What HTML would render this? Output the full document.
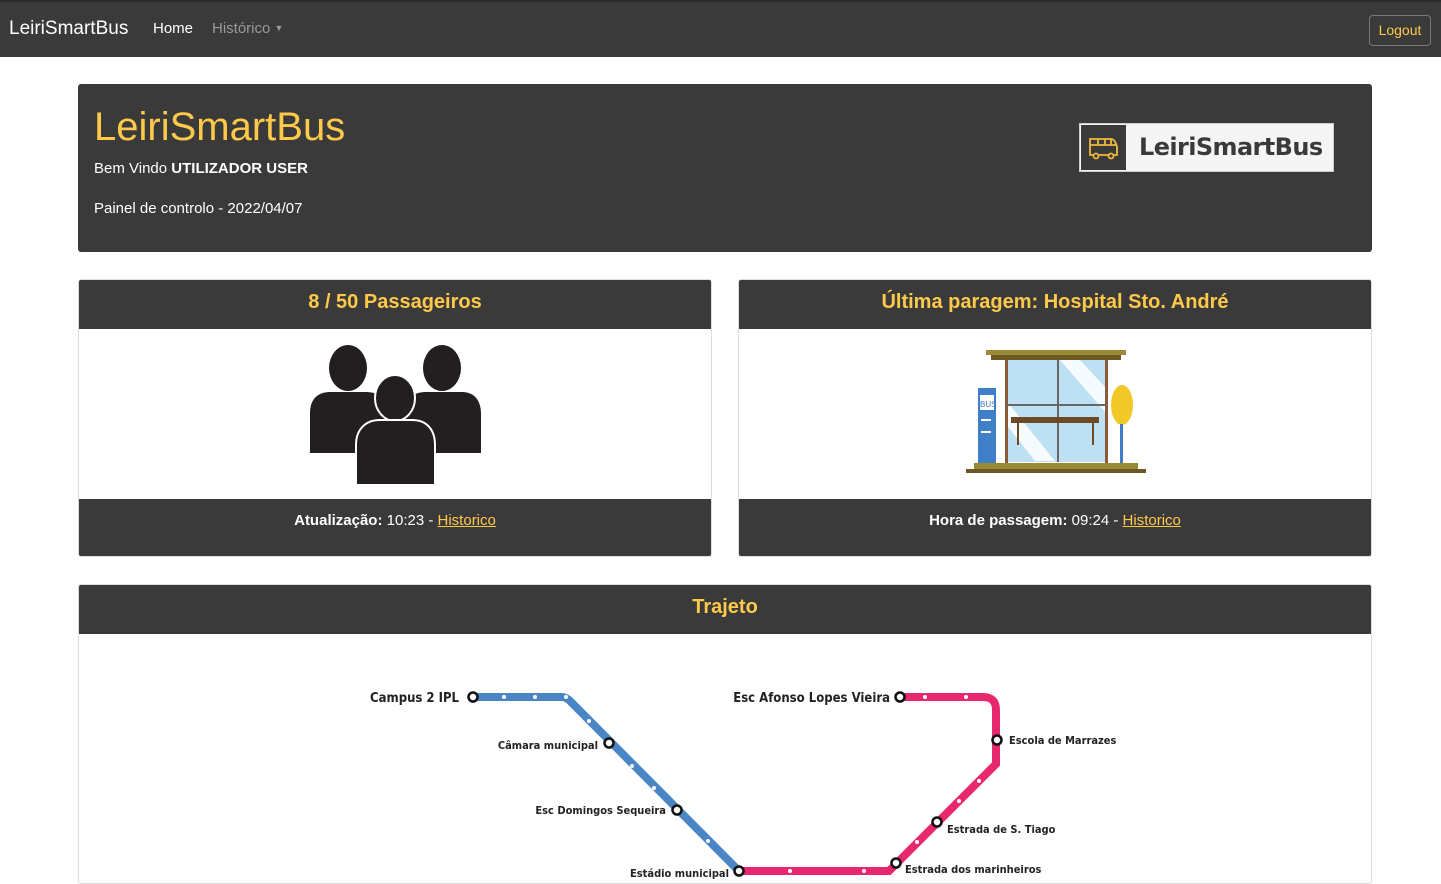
<!DOCTYPE html>
<html><head><meta charset="utf-8"><style>
*{box-sizing:border-box;margin:0;padding:0}
body{width:1441px;height:872px;overflow:hidden;background:#fff;font-family:"Segoe UI","Liberation Sans",sans-serif;position:relative}
.nav{position:absolute;left:0;top:0;width:1441px;height:57px;background:#3a3a3a;border-top:2px solid #2a2a2a}
.abs{position:absolute}
.dark{background:#3a3a3a;border-radius:3px}
.y{color:#ffc94a}
.w{color:#fff}
a{color:#ffc94a;text-decoration:underline}
.hdr{position:absolute;left:0;right:0;top:0;height:49px;background:#3a3a3a;text-align:center;font-weight:bold;font-size:20px;line-height:44px;color:#ffc94a}
.ftr{position:absolute;left:0;right:0;bottom:0;height:57px;background:#3a3a3a;text-align:center;font-size:15px;line-height:44px;color:#fff}
.card{position:absolute;border:1px solid #ddd;border-radius:3px;overflow:hidden;background:#fff}
</style></head><body>
<div class="nav">
 <div class="abs w" style="left:9px;top:16px;font-size:19px">LeiriSmartBus</div>
 <div class="abs w" style="left:153px;top:18px;font-size:15px">Home</div>
 <div class="abs" style="left:212px;top:18px;font-size:15px;color:#9a9a9a">Histórico <span style="font-size:9px;vertical-align:2px">▼</span></div>
 <div class="abs y" style="left:1369px;top:13px;width:62px;height:31px;border:1px solid #777;border-radius:4px;font-size:14px;text-align:center;line-height:29px">Logout</div>
</div>
<div class="abs dark" style="left:78px;top:84px;width:1294px;height:168px">
 <div class="abs y" style="left:16px;top:18px;font-size:40px;line-height:50px">LeiriSmartBus</div>
 <div class="abs w" style="left:16px;top:76px;font-size:15px">Bem Vindo <b>UTILIZADOR USER</b></div>
 <div class="abs w" style="left:16px;top:116px;font-size:15px">Painel de controlo - 2022/04/07</div>
 <div class="abs" style="left:1001px;top:39px;width:255px;height:49px;background:#f5f5f5;border:1px solid #ccc;overflow:hidden">
  <div class="abs" style="left:1px;top:1px;width:45px;height:45px;background:#3a3a3a">
   <svg width="45" height="45" viewBox="0 0 45 45"><g fill="none" stroke="#f0b93a" stroke-width="1.8"><path d="M9 14h21c3 0 5 4 6 8v8h-27z"/><path d="M9 20h26M17 14v6M24 14v6M30 14v6"/><circle cx="15" cy="31" r="2.5" fill="#3a3a3a"/><circle cx="30" cy="31" r="2.5" fill="#3a3a3a"/></g></svg>
  </div>
  <div class="abs" style="left:59px;top:9px;font-size:24px;font-weight:bold;color:#3a3a3a;font-family:'DejaVu Sans','Liberation Sans',sans-serif;letter-spacing:-0.6px">LeiriSmartBus</div>
 </div>
</div>

<div class="card" style="left:78px;top:279px;width:634px;height:278px">
 <div class="hdr">8 / 50 Passageiros</div>
 <svg class="abs" style="left:0;top:49px" width="634" height="172">
  <g fill="#231f20">
   <ellipse cx="269" cy="39" rx="19" ry="23"/>
   <path d="M231 124v-40c0-14 8-21 20-21h36c14 0 22 8 22 22v39z"/>
   <ellipse cx="363" cy="39" rx="19" ry="23"/>
   <path d="M325 124v-39c0-14 8-22 22-22h36c12 0 19 8 19 22v39z"/>
   <ellipse cx="316" cy="69" rx="20" ry="23" stroke="#fff" stroke-width="2"/>
   <path d="M277 156v-40c0-15 9-25 24-25h32c15 0 23 10 23 25v40z" stroke="#fff" stroke-width="2"/>
  </g>
 </svg>
 <div class="ftr"><b>Atualização:</b> 10:23 - <a>Historico</a></div>
</div>

<div class="card" style="left:738px;top:279px;width:634px;height:278px">
 <div class="hdr">Última paragem: Hospital Sto. André</div>
 <svg class="abs" style="left:0;top:49px" width="634" height="172">
  <rect x="266" y="28" width="102" height="105" fill="#bde0f3"/>
  <path d="M320 30l48 55v-25l-30-32zM266 70l50 62h-20l-30-38z" fill="#f5fbff"/>
  <rect x="266" y="28" width="3" height="107" fill="#8a5a3a"/>
  <rect x="366" y="28" width="3" height="107" fill="#8a5a3a"/>
  <rect x="318" y="28" width="2" height="105" fill="#666"/>
  <rect x="266" y="75" width="102" height="2" fill="#666"/>
  <rect x="247" y="21" width="140" height="5" fill="#9b8a35"/>
  <rect x="252" y="26" width="130" height="5" fill="#6b5a25"/>
  <rect x="272" y="88" width="88" height="6" fill="#6b4a25"/>
  <rect x="278" y="94" width="2" height="22" fill="#6b4a25"/><rect x="353" y="94" width="2" height="22" fill="#6b4a25"/>
  <rect x="239" y="59" width="18" height="76" fill="#3f7fc9"/>
  <rect x="241" y="66" width="14" height="15" fill="#fff"/>
  <text x="241" y="78" font-size="8" fill="#3f7fc9" font-family="Liberation Sans">BUS</text>
  <rect x="242" y="90" width="10" height="2" fill="#fff"/><rect x="242" y="102" width="10" height="2" fill="#fff"/>
  <ellipse cx="383" cy="76" rx="11" ry="20" fill="#f0c928"/>
  <rect x="381" y="95" width="3" height="40" fill="#3f7fc9"/>
  <rect x="235" y="134" width="164" height="6" fill="#9b8a35"/>
  <rect x="227" y="140" width="180" height="4" fill="#6b5a25"/>
 </svg>
 <div class="ftr"><b>Hora de passagem:</b> 09:24 - <a>Historico</a></div>
</div>

<div class="card" style="left:78px;top:584px;width:1294px;height:300px">
 <div class="hdr">Trajeto</div>
 <svg class="abs" style="left:0;top:0" width="1294" height="300" font-family="'DejaVu Sans Condensed','Liberation Sans Narrow',sans-serif" font-weight="bold">
  <path d="M394 112h88q6 0 10 5l168 169" stroke="#4a86c5" stroke-width="8" fill="none"/>
  <path d="M660 286h150l107-107v-54q0-13-13-13h-83" stroke="#e8286e" stroke-width="8" fill="none"/>
  <g fill="#fff"><circle cx="425" cy="112" r="2"/><circle cx="456" cy="112" r="2"/><circle cx="487" cy="112" r="2"/><circle cx="510" cy="136" r="2"/><circle cx="553" cy="181" r="2"/><circle cx="575" cy="203" r="2"/><circle cx="629" cy="256" r="2"/><circle cx="846" cy="112" r="2"/><circle cx="887" cy="112" r="2"/><circle cx="900" cy="196" r="2"/><circle cx="880" cy="216" r="2"/><circle cx="838" cy="257" r="2"/><circle cx="711" cy="286" r="2"/><circle cx="785" cy="286" r="2"/></g>
  <g fill="#fff" stroke="#111" stroke-width="2.5"><circle cx="394" cy="112" r="4.5"/><circle cx="530" cy="158" r="4.5"/><circle cx="598" cy="225" r="4.5"/><circle cx="660" cy="286" r="4.5"/><circle cx="821" cy="112" r="4.5"/><circle cx="918" cy="155" r="4.5"/><circle cx="858" cy="237" r="4.5"/><circle cx="817" cy="278" r="4.5"/></g>
  <g fill="#222"><text x="380" y="117" font-size="13" text-anchor="end">Campus 2 IPL</text>
  <text x="519" y="164" font-size="11" text-anchor="end">Câmara municipal</text>
  <text x="587" y="229" font-size="11" text-anchor="end">Esc Domingos Sequeira</text>
  <text x="811" y="117" font-size="13" text-anchor="end">Esc Afonso Lopes Vieira</text>
  <text x="930" y="159" font-size="11">Escola de Marrazes</text>
  <text x="868" y="248" font-size="11">Estrada de S. Tiago</text>
  <text x="826" y="288" font-size="11">Estrada dos marinheiros</text>
  <text x="650" y="292" font-size="11" text-anchor="end">Estádio municipal</text></g>
 </svg>
</div>
</body></html>
